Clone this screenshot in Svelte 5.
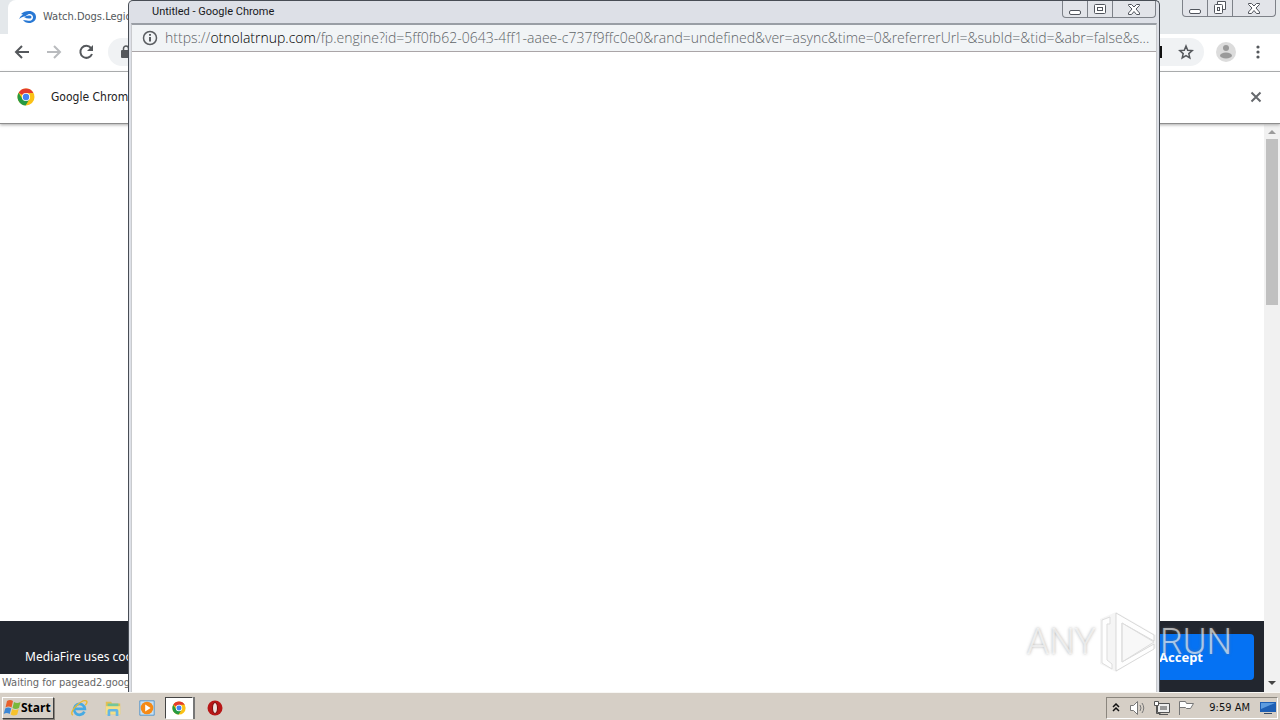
<script>
  const query =
    '/fp.engine?id=5ff0fb62-0643-4ff1-aaee-c737f9ffc0e0&rand=undefined&ver=async&time=0&referrerUrl=&subId=&tid=&abr=false&s...';
</script>

{#snippet chromeLogo(size)}
  <svg width={size} height={size} viewBox="0 0 18 18" aria-hidden="true">
    <circle cx="9" cy="9" r="8.5" fill="#fbc116" />
    <path d="M9 9 1.6 4.8A8.5 8.5 0 0 1 16.4 4.9H9z" fill="#e33b2e" />
    <path d="M1.6 4.8A8.5 8.5 0 0 0 8.6 17.5L12.5 11 9 9 5.5 11z" fill="#269a43" />
    <circle cx="9" cy="9" r="4.1" fill="#fff" />
    <circle cx="9" cy="9" r="3.2" fill="#4384f3" />
  </svg>
{/snippet}

{#snippet captionButtons(restored)}
  <div class="caption">
    <button aria-label="Minimize">
      <svg width="14" height="14" viewBox="0 0 14 14"><rect x="1.5" y="8.5" width="11" height="4" rx="1.5" /></svg>
    </button>
    <button aria-label={restored ? 'Restore' : 'Maximize'}>
      <svg width="14" height="14" viewBox="0 0 14 14">
        {#if restored}
          <path d="M4.5 3.5v-3h8v8h-3" />
          <rect x="1.5" y="3.5" width="8" height="9" rx="1" />
          <rect x="4.5" y="6.5" width="2" height="3" />
        {:else}
          <rect x="1.5" y="2.5" width="11" height="9" rx="1" />
          <rect x="4.5" y="5.5" width="5" height="3" />
        {/if}
      </svg>
    </button>
    <button class="close" aria-label="Close">
      <svg width="14" height="14" viewBox="0 0 14 14"><path d="M1.5 2.5h3L7 5l2.5-2.5h3v1L9 7l3.5 4v1.5h-3L7 9.5l-2.5 3h-3V11L5 7 1.5 3.5z" /></svg>
    </button>
  </div>
{/snippet}

<div class="screen">
  <main class="desktop">
    <section class="browser">
      <header class="tabs">
        <div class="tab">
          <svg width="18" height="14" viewBox="0 0 18 14" aria-hidden="true">
            <path d="M2 4Q5 1 10 1c4 0 7 2.500 7 6s-3 6-7 6q-4 0-6-3l4 .5c5 1 6-1.500 6-3.500s-2-3.500-4-3-2 2-5 2.500Q2 7 0 9q1-3 4-4.500z" fill="#2878d4" />
            <path d="M5 7q3-2 6-1.500a1.500 1.500 0 0 1 0 3Q8 9 5 7z" fill="#2878d4" />
          </svg>
          <span>Watch.Dogs.Legion</span>
        </div>
        {@render captionButtons(true)}
      </header>

      <div class="toolbar">
        <button aria-label="Back"><svg width="20" height="20" viewBox="0 0 20 20"><path d="M17 10H4M10 4l-6 6 6 6" fill="none" stroke="#55585c" stroke-width="2" /></svg></button>
        <button aria-label="Forward"><svg width="20" height="20" viewBox="0 0 20 20"><path d="M3 10h13M10 4l6 6-6 6" fill="none" stroke="#b9bbbe" stroke-width="2" /></svg></button>
        <button aria-label="Reload"><svg width="20" height="20" viewBox="0 0 20 20"><path d="M15 6a6 6 0 1 0 1 6" fill="none" stroke="#55585c" stroke-width="2" /><path d="M17 3v6h-6z" fill="#55585c" /></svg></button>
        <div class="address">
          <svg width="12" height="14" viewBox="0 0 12 14" aria-hidden="true"><rect x="1" y="5" width="10" height="8" rx="1" fill="#55585c" /><path d="M3.5 6V3.5a2.5 2.5 0 0 1 5 0V6" fill="none" stroke="#55585c" stroke-width="1.5" /></svg>
          <span class="caret"></span>
          <button aria-label="Bookmark this tab"><svg width="16" height="16" viewBox="0 0 16 16"><path d="m8 2 1.700 4.200 4.500.4-3.400 3 1 4.400L8 11.600 4.200 14l1-4.400-3.400-3 4.500-.4z" fill="none" stroke="#55585c" stroke-width="1.5" /></svg></button>
        </div>
        <button aria-label="Profile"><svg width="20" height="20" viewBox="0 0 20 20"><circle cx="10" cy="10" r="10" fill="#dcdcdc" /><circle cx="10" cy="6" r="3" fill="#9a9a9a" /><ellipse cx="10" cy="13.5" rx="6" ry="3" fill="#9a9a9a" /></svg></button>
        <button aria-label="Menu"><svg width="20" height="16" viewBox="0 0 20 16"><g fill="#55585c"><circle cx="10" cy="3" r="1.6" /><circle cx="10" cy="8" r="1.6" /><circle cx="10" cy="13" r="1.6" /></g></svg></button>
      </div>

      <div class="infobar">
        {@render chromeLogo(18)}
        <span>Google Chrome</span>
        <button aria-label="Dismiss"><svg width="12" height="12" viewBox="0 0 12 12"><path d="m1.500 1.500 9 9m0-9-9 9" stroke="#66696d" stroke-width="2" /></svg></button>
      </div>

      <div class="viewport">
        <div class="page">
          <div class="cookies">
            <p>MediaFire uses cookies</p>
            <button>Accept</button>
          </div>
        </div>
        <div class="scrollbar">
          <svg width="16" height="15" viewBox="0 0 16 15" aria-hidden="true"><path d="M4 10 8 6l4 4z" fill="#9b9b9b" /></svg>
          <div class="track"><div class="thumb"></div></div>
          <svg width="16" height="16" viewBox="0 0 16 16" aria-hidden="true"><path d="m4 5 4 4 4-4z" fill="#454545" /></svg>
        </div>
      </div>
      <div class="status">Waiting for pagead2.google</div>
    </section>

    <section class="popup">
      <header class="titlebar">
        <h1>Untitled - Google Chrome</h1>
        {@render captionButtons(false)}
      </header>
      <div class="popup-body">
        <div class="location">
          <svg width="16" height="16" viewBox="0 0 16 16" aria-hidden="true"><circle cx="8" cy="8" r="6.5" fill="none" stroke="#5a5d61" stroke-width="1.5" /><path d="M8 7v4.500M8 4v1.800" stroke="#5a5d61" stroke-width="2" /></svg>
          <p>https://<b>otnolatrnup.com</b>{query}</p>
        </div>
      </div>
    </section>
  </main>

  <footer class="taskbar">
    <button class="start">
      <svg width="18" height="16" viewBox="0 0 18 16" aria-hidden="true">
        <path d="M4 1q3-2 6 0L8.500 7.500q-3-2-6 0z" fill="#e8602c" />
        <path d="M11 2q3 2 6.500 0L16 8q-3.500 2-6.500 0z" fill="#79b83c" />
        <path d="M2.200 8.500q3-2 6 0L6.700 14q-3-2-6 0z" fill="#3c87d5" />
        <path d="M9.200 9q3 2 6.500 0l-1.500 5.500q-3.500 2-6.500 0z" fill="#f7c22c" />
      </svg>
      Start
    </button>
    <nav class="launch">
      <button aria-label="Internet Explorer"><svg width="18" height="18" viewBox="0 0 20 20"><path d="M16 14A6 6 0 1 1 16.500 11H5" fill="none" stroke="#46aae3" stroke-width="3" /><path d="M3 18C-2 14 13 0 18 2c2 1 0 4-1 5" fill="none" stroke="#eab92e" stroke-width="1.5" /></svg></button>
      <button aria-label="Explorer"><svg width="18" height="18" viewBox="0 0 20 20"><path d="M2 3h6l1 2h9v12H2z" fill="#e3c052" /><path d="M4 5h12v5H4z" fill="#73c69c" /><path d="M2 8h16v9H2z" fill="#f5df85" /><path d="M4 19v-6q0-2 2-2h8q2 0 2 2v6h-3v-5H7v5z" fill="#63b6e5" /></svg></button>
      <button aria-label="Media Player"><svg width="18" height="18" viewBox="0 0 20 20"><path d="M2 2h16v16H2z" fill="#c6e0f4" stroke="#4e93c9" /><circle cx="10" cy="10" r="7" fill="#f58a16" /><path d="m8 6 6 4-6 4z" fill="#fff" /></svg></button>
      <button class="active" aria-label="Google Chrome">{@render chromeLogo(14)}</button>
      <button aria-label="Opera"><svg width="18" height="18" viewBox="0 0 18 18"><circle cx="9" cy="9" r="7.5" fill="#b81717" /><ellipse cx="9" cy="9" rx="2.5" ry="5.5" fill="#eee3df" stroke="#7c0909" /></svg></button>
    </nav>
    <div class="tray">
      <button aria-label="Show hidden icons"><svg width="8" height="10" viewBox="0 0 8 10"><path d="m1 4 3-3 3 3M1 8l3-3 3 3" fill="none" stroke="#111" stroke-width="1.5" /></svg></button>
      <button aria-label="Volume"><svg width="18" height="16" viewBox="0 0 18 16"><path d="M1.500 5.500h3l4-4v13l-4-4h-3z" fill="#fff" stroke="#777" /><path d="M11 5q2 3 0 6M13 3q3.500 5 0 10" fill="none" stroke="#777" /></svg></button>
      <button aria-label="Network"><svg width="18" height="16" viewBox="0 0 18 16"><path d="M4.500 3.500h12v9h-12z" fill="#eee" stroke="#555" /><path d="M7 6h7v4H7z" fill="#999" /><path d="M6 14.500h9M3.500 5.500v8h4" fill="none" stroke="#555" /><path d="M1.500 1.500v4h4v-4z" fill="#fff" stroke="#555" /></svg></button>
      <button aria-label="Action Center"><svg width="18" height="16" viewBox="0 0 18 16"><path d="M2.500 15V1.500h6l1 2h7l-3 5h-4l-1-1h-6" fill="#fff" stroke="#777" /></svg></button>
      <time>9:59 AM</time>
      <button aria-label="Show desktop"><svg width="16" height="14" viewBox="0 0 16 14"><path d="M0 1h16v10H0z" fill="#1e5fb4" /><path d="M1 2h14L1 8z" fill="#5c9bdf" /><path d="M4 12h8v1H4z" fill="#354a66" /></svg></button>
    </div>
  </footer>

  <div class="watermark">
    <span>ANY</span>
    <svg width="60" height="64" viewBox="0 0 60 64" aria-hidden="true">
      <path d="M2 9 18 2l40 23v13L18 62 2 54z" fill="#999" fill-opacity=".1" />
      <path d="M18 3v58l38-22v-5L24 52V13l32 18v-6z" fill="#fff" fill-opacity=".85" stroke="#ccc" stroke-opacity=".7" />
      <path d="M24 13v39l32-20z" fill="#fff" fill-opacity=".3" stroke="#ddd" />
      <path d="M12 7 4 10v43l10 6v-5l-5-4V14h3z" fill="#fff" fill-opacity=".9" stroke="#ddd" />
    </svg>
    <span>RUN</span>
  </div>
</div>

<style>
  :global(body) {
    margin: 0;
  }

  * {
    box-sizing: border-box;
  }

  button {
    display: flex;
    align-items: center;
    justify-content: center;
    border: 0;
    padding: 0;
    background: none;
    font: inherit;
    color: inherit;
  }

  svg {
    display: block;
    flex: none;
  }

  p,
  h1 {
    margin: 0;
  }

  .screen {
    position: relative;
    display: flex;
    flex-direction: column;
    height: 100vh;
    overflow: hidden;
    font: 11px/16px 'DejaVu Sans Condensed', 'Noto Sans', sans-serif;
    white-space: nowrap;
  }

  .desktop {
    position: relative;
    flex: 1;
    min-height: 0;
  }

  .browser {
    position: absolute;
    inset: 0;
    display: flex;
    flex-direction: column;
    background: #fff;
  }

  .tabs {
    display: flex;
    justify-content: space-between;
    align-items: flex-start;
    height: 34px;
    padding: 0 4px 0 8px;
    background: #e4e8eb;
  }

  .tab {
    display: flex;
    align-items: center;
    gap: 6px;
    width: 240px;
    height: 34px;
    padding-left: 11px;
    border-radius: 8px 8px 0 0;
    background: #fff;
    color: #54585c;
  }

  .caption {
    display: flex;
    flex: none;
    height: 17px;
    border: 1px solid #7d8188;
    border-top: 0;
    border-radius: 0 0 4px 4px;
    background: #e2e4e9;
  }

  .caption button {
    width: 25px;
    border-right: 1px solid #7d8188;
  }

  .caption .close {
    width: 42px;
    border-right: 0;
  }

  .caption svg {
    fill: #fff;
    stroke: #51555d;
  }

  .toolbar {
    display: flex;
    align-items: center;
    gap: 12px;
    height: 38px;
    padding: 0 12px 2px;
    border-bottom: 1px solid #a9abad;
  }

  .address {
    display: flex;
    flex: 1;
    align-items: center;
    height: 28px;
    padding: 0 10px 0 12px;
    border-radius: 14px;
    background: #f0f2f4;
  }

  .caret {
    width: 2px;
    height: 12px;
    margin: 0 16px 0 auto;
    background: #111;
  }

  .infobar {
    position: relative;
    display: flex;
    align-items: center;
    gap: 16px;
    height: 52px;
    padding: 0 18px 2px 17px;
    border-bottom: 1px solid #8d8d8d;
    background: #fff;
    box-shadow: 0 1px 3px #aaa;
    color: #222;
    font-size: 12px;
  }

  .infobar button {
    margin-left: auto;
  }

  .viewport {
    display: flex;
    flex: 1;
    min-height: 0;
  }

  .page {
    display: flex;
    flex: 1;
    flex-direction: column;
    justify-content: flex-end;
  }

  .cookies {
    display: flex;
    align-items: center;
    justify-content: space-between;
    height: 71px;
    padding: 0 10px 0 25px;
    background: #22262f;
    color: #fff;
    font: 12px/16px 'Noto Sans', sans-serif;
  }

  .cookies button {
    width: 146px;
    height: 46px;
    border-radius: 4px;
    background: #0572f3;
    font-size: 13px;
    font-weight: 700;
  }

  .scrollbar {
    display: flex;
    flex-direction: column;
    width: 16px;
    background: #f1f1f1;
  }

  .track {
    flex: 1;
    padding: 0 2px;
  }

  .thumb {
    height: 31%;
    background: #c0c0c0;
  }

  .status {
    position: absolute;
    bottom: 0;
    left: 0;
    width: 240px;
    height: 18px;
    padding: 1px 2px;
    background: #fff;
    color: #666;
  }

  .popup {
    position: absolute;
    top: 0;
    right: 120px;
    bottom: 0;
    left: 10%;
    display: flex;
    flex-direction: column;
    border: 1px solid #484d55;
    border-bottom: 0;
    border-radius: 5px 5px 0 0;
    background: #dde0e7;
  }

  .titlebar {
    display: flex;
    align-items: flex-start;
    justify-content: space-between;
    height: 22px;
    padding: 0 3px 0 23px;
  }

  h1 {
    padding-top: 3px;
    color: #17191c;
    font: 11px/16px Roboto, 'Noto Sans', sans-serif;
  }

  .popup-body {
    flex: 1;
    margin: 0 2px;
    border: 1px solid #999ea5;
    border-width: 2px 1px 0;
    border-color: #999ea5 #c9cbce;
    background: #fff;
  }

  .location {
    display: flex;
    align-items: center;
    gap: 7px;
    height: 27px;
    padding: 0 4px 0 10px;
    border-bottom: 1px solid #aaa5a7;
    background: #f1f4f6;
    color: #5f6468;
    font: 300 14px/20px 'Open Sans', 'Noto Sans', sans-serif;
  }

  .location p {
    overflow: hidden;
    text-overflow: ellipsis;
  }

  .location b {
    color: #000;
    font-weight: 300;
  }

  .taskbar {
    display: flex;
    align-items: center;
    height: 28px;
    padding: 2px 2px 0;
    border-top: 1px solid #f8f7f4;
    background: #d6cfc6;
  }

  .start {
    justify-content: flex-start;
    width: 52px;
    height: 22px;
    border: 1px solid;
    border-color: #fff #404040 #404040 #fff;
    box-shadow: 1px 1px #8a857e;
    color: #000;
    font: 700 12px/16px 'Open Sans', 'Noto Sans', sans-serif;
  }

  .launch {
    display: flex;
    flex: 1;
    align-items: center;
    gap: 4px;
    padding-left: 10px;
  }

  .launch button {
    width: 30px;
    height: 22px;
  }

  .launch .active {
    width: 28px;
    margin: 0 3px 0 -1px;
    border: 1px solid;
    border-color: #444 #fff #fff #444;
    background: #fff;
    box-shadow: 2px 0 #777;
  }

  .tray {
    display: flex;
    align-items: center;
    gap: 6px;
    height: 22px;
    padding: 0 1px 0 5px;
    border: 1px solid;
    border-color: #8b867e #fff #fff #8b867e;
    color: #111;
  }

  .tray button:first-child {
    margin-right: 3px;
  }

  .tray time {
    margin: 0 4px 0 8px;
  }

  .watermark {
    position: absolute;
    right: 48px;
    bottom: 46px;
    display: flex;
    align-items: center;
    gap: 2px;
    color: rgb(255 255 255 / 60%);
    font: 300 36px/64px Roboto, 'Noto Sans', sans-serif;
    text-shadow: 0 0 3px rgb(120 120 120 / 60%);
    pointer-events: none;
  }
</style>
